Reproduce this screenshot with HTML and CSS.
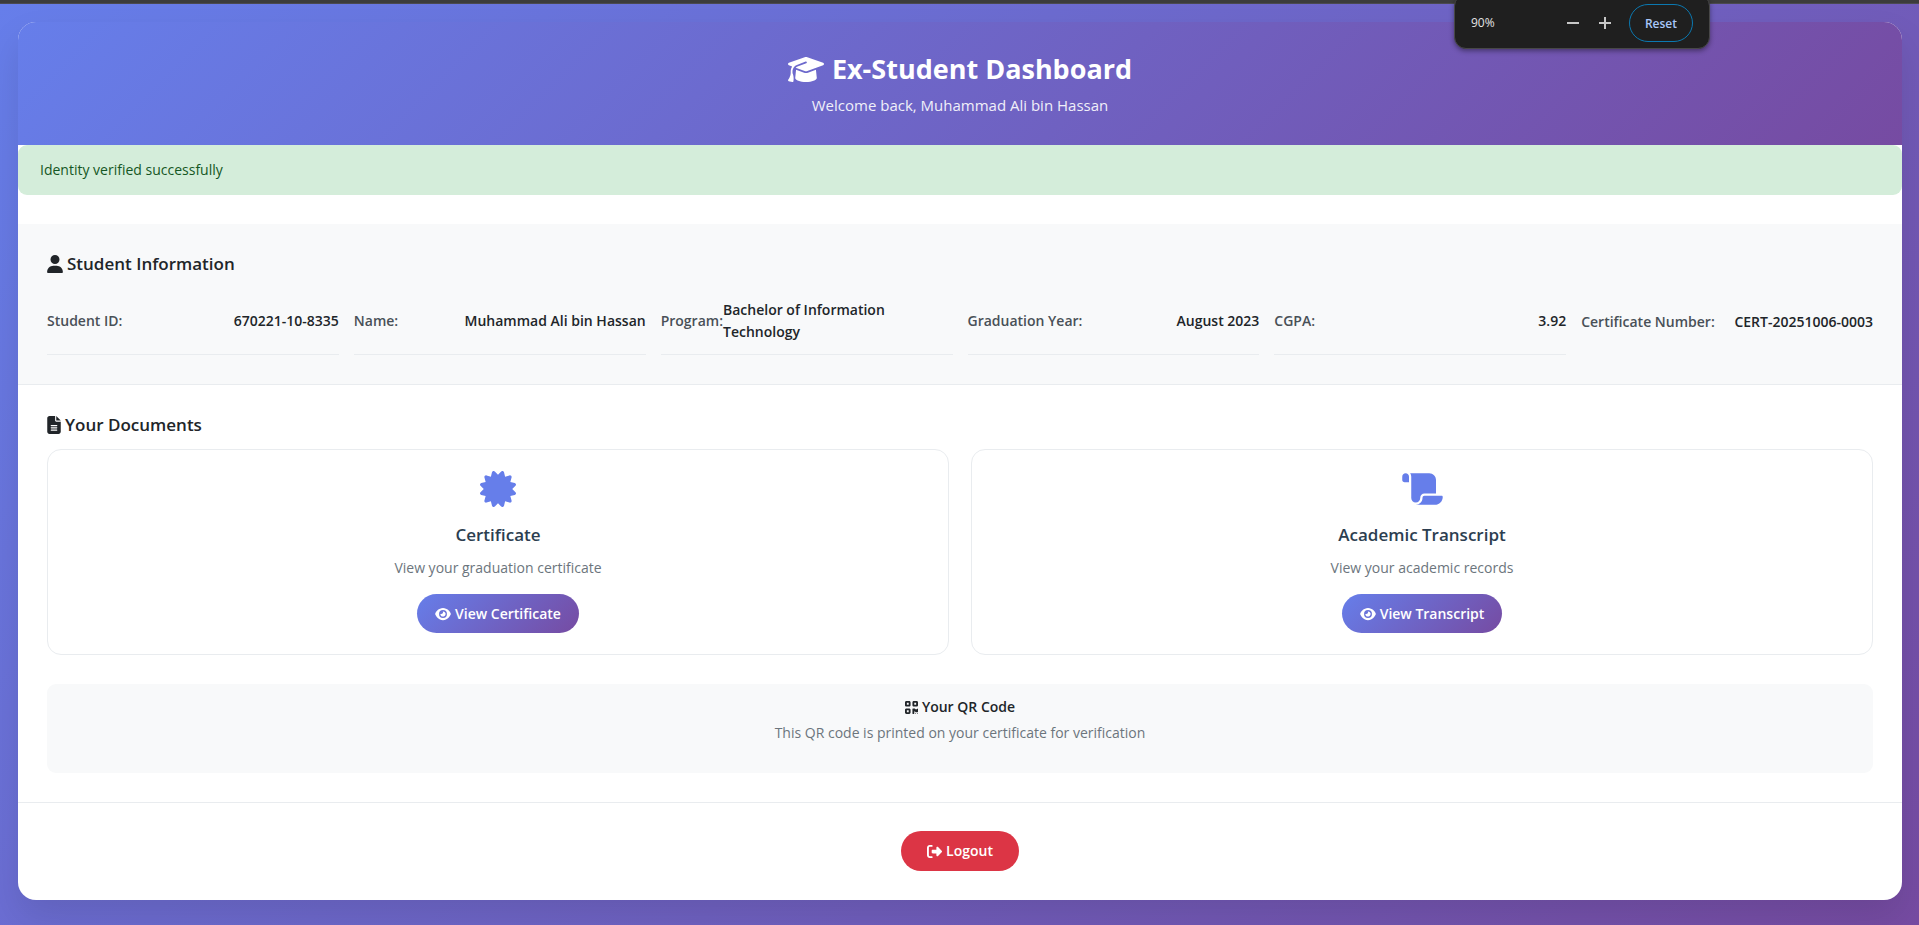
FILE: index.html
```html
<!DOCTYPE html>
<html lang="en">
<head>
<meta charset="utf-8">
<meta name="viewport" content="width=device-width, initial-scale=1">
<title>Ex-Student Dashboard</title>
<link rel="stylesheet" href="styles.css">
</head>
<body>
<svg class="sprite" aria-hidden="true">
  <symbol id="cap" viewBox="0 0 640 512"><path d="M320 32c-8.100 0-16.100 1.400-23.700 4.100L15.800 137.400C6.300 140.900 0 149.900 0 160s6.300 19.100 15.800 22.600l57.900 20.900C57.300 229.300 48 259.800 48 291.900v28.100c0 28.400-10.800 57.700-22.300 80.800c-6.500 13-13.900 25.800-22.500 37.600C0 442.700-.9 448.300 .9 453.400s6 8.900 11.200 10.200l64 16c4.200 1.100 8.700 .3 12.400-2s6.300-6.100 7.100-10.400c8.600-42.800 4.300-81.200-2.100-108.700C90.300 344.300 86 329.800 80 316.500V291.900c0-30.200 10.200-58.700 27.900-81.500c12.900-15.500 29.600-28 49.200-35.700l157-61.700c8.200-3.200 17.500 .8 20.700 9s-.8 17.500-9 20.700l-157 61.700c-12.400 4.900-23.300 12.400-32.200 21.600l159.600 57.600c7.600 2.700 15.600 4.100 23.700 4.100s16.100-1.400 23.700-4.100L624.200 182.600c9.500-3.400 15.800-12.500 15.800-22.600s-6.300-19.100-15.800-22.600L343.700 36.100C336.100 33.400 328.100 32 320 32zM128 408c0 35.300 86 72 192 72s192-36.700 192-72L496.700 262.600 354.500 314c-11.100 4-22.800 6-34.500 6s-23.500-2-34.500-6L143.300 262.600 128 408z"/></symbol>
  <symbol id="user" viewBox="0 0 448 512"><path d="M224 256A128 128 0 1 0 224 0a128 128 0 1 0 0 256zm-45.700 48C79.800 304 0 383.800 0 482.300C0 498.700 13.300 512 29.700 512H418.300c16.400 0 29.700-13.300 29.700-29.700C448 383.800 368.200 304 269.700 304H178.300z"/></symbol>
  <symbol id="file" viewBox="0 0 384 512"><path d="M64 0C28.700 0 0 28.700 0 64V448c0 35.300 28.700 64 64 64H320c35.300 0 64-28.700 64-64V160H256c-17.700 0-32-14.300-32-32V0H64zM256 0V128H384L256 0zM112 256H272c8.800 0 16 7.200 16 16s-7.200 16-16 16H112c-8.800 0-16-7.200-16-16s7.200-16 16-16zm0 64H272c8.800 0 16 7.200 16 16s-7.200 16-16 16H112c-8.800 0-16-7.200-16-16s7.200-16 16-16zm0 64H272c8.800 0 16 7.200 16 16s-7.200 16-16 16H112c-8.800 0-16-7.200-16-16s7.200-16 16-16z"/></symbol>
  <symbol id="certificate" viewBox="0 0 512 512"><path d="M211 7.300C205 1 196-1.400 187.600 .8s-14.900 8.900-17.100 17.300L154.700 80.600l-62-17.500c-8.400-2.400-17.400 0-23.500 6.100s-8.500 15.100-6.100 23.500l17.500 62L18.100 170.600c-8.400 2.100-15 8.700-17.300 17.100S1 205 7.300 211l46.200 45L7.300 301C1 307-1.400 316 .8 324.400s8.900 14.900 17.300 17.100l62.500 15.800-17.500 62c-2.400 8.400 0 17.400 6.100 23.500s15.100 8.500 23.500 6.100l62-17.500 15.800 62.500c2.100 8.400 8.700 15 17.100 17.300s17.300-.2 23.400-6.400l45-46.200 45 46.200c6.100 6.200 15 8.700 23.400 6.400s14.900-8.900 17.100-17.300l15.800-62.500 62 17.500c8.400 2.400 17.400 0 23.500-6.100s8.500-15.100 6.100-23.500l-17.500-62 62.500-15.800c8.400-2.100 15-8.700 17.300-17.100s-.2-17.400-6.400-23.400l-46.200-45 46.200-45c6.200-6.100 8.700-15 6.400-23.400s-8.900-14.900-17.300-17.100l-62.500-15.800 17.500-62c2.400-8.400 0-17.400-6.100-23.500s-15.100-8.500-23.500-6.100l-62 17.500L341.400 18.100c-2.100-8.400-8.700-15-17.100-17.300S307 1 301 7.300L256 53.500 211 7.300z"/></symbol>
  <symbol id="scroll" viewBox="0 0 576 512"><path d="M0 80v48c0 17.700 14.300 32 32 32H48 96V80c0-26.500-21.500-48-48-48S0 53.500 0 80zM112 32c10 13.400 16 30 16 48V384c0 35.300 28.700 64 64 64s64-28.700 64-64v-5.300c0-32.400 26.300-58.700 58.700-58.700H480V128c0-53-43-96-96-96H112zM464 480c61.900 0 112-50.100 112-112c0-8.800-7.200-16-16-16H314.700c-14.700 0-26.700 11.900-26.700 26.700V384c0 53-43 96-96 96H368h96z"/></symbol>
  <symbol id="eye" viewBox="0 0 576 512"><path d="M288 32c-80.800 0-145.500 36.800-192.600 80.600C48.600 156 17.300 208 2.500 243.700c-3.300 7.900-3.300 16.700 0 24.600C17.300 304 48.600 356 95.400 399.400C142.500 443.200 207.200 480 288 480s145.500-36.800 192.600-80.600c46.800-43.500 78.100-95.400 93-131.100c3.300-7.900 3.300-16.700 0-24.600c-14.900-35.700-46.200-87.700-93-131.100C433.500 68.800 368.800 32 288 32zM144 256a144 144 0 1 1 288 0 144 144 0 1 1 -288 0zm144-64c0 35.300-28.700 64-64 64c-7.100 0-13.900-1.200-20.300-3.300c-5.500-1.800-11.900 1.600-11.700 7.400c.3 6.900 1.300 13.800 3.200 20.700c13.700 51.200 66.400 81.600 117.600 67.900s81.600-66.400 67.900-117.600c-11.100-41.500-47.800-69.400-88.600-71.100c-5.800-.2-9.200 6.100-7.400 11.700c2.100 6.400 3.300 13.200 3.300 20.300z"/></symbol>
  <symbol id="qr" viewBox="0 0 448 512"><path d="M0 80C0 53.500 21.500 32 48 32h96c26.500 0 48 21.500 48 48v96c0 26.500-21.500 48-48 48H48c-26.500 0-48-21.500-48-48V80zM64 96v64h64V96H64zM0 336c0-26.500 21.500-48 48-48h96c26.500 0 48 21.500 48 48v96c0 26.500-21.500 48-48 48H48c-26.500 0-48-21.500-48-48V336zm64 16v64h64V352H64zM304 32h96c26.500 0 48 21.500 48 48v96c0 26.500-21.500 48-48 48H304c-26.500 0-48-21.500-48-48V80c0-26.500 21.500-48 48-48zm80 64H320v64h64V96zM256 304c0-8.800 7.200-16 16-16h64c8.800 0 16 7.200 16 16s7.200 16 16 16h32c8.800 0 16-7.200 16-16s7.200-16 16-16s16 7.200 16 16v96c0 8.800-7.200 16-16 16H368c-8.800 0-16-7.200-16-16s-7.200-16-16-16s-16 7.200-16 16v64c0 8.800-7.200 16-16 16H272c-8.800 0-16-7.200-16-16V304zM368 480a16 16 0 1 1 0-32 16 16 0 1 1 0 32zm64 0a16 16 0 1 1 0-32 16 16 0 1 1 0 32z" fill-rule="evenodd"/></symbol>
  <symbol id="logout" viewBox="0 0 512 512"><path d="M377.900 105.900L500.700 228.700c7.200 7.200 11.300 17.100 11.300 27.300s-4.100 20.100-11.300 27.300L377.900 406.100c-6.400 6.400-15 9.900-24 9.900c-18.700 0-33.900-15.200-33.900-33.900l0-62.100-128 0c-17.700 0-32-14.300-32-32l0-64c0-17.700 14.300-32 32-32l128 0 0-62.100c0-18.700 15.200-33.900 33.900-33.900c9 0 17.600 3.600 24 9.900zM160 96L96 96c-17.700 0-32 14.300-32 32l0 256c0 17.700 14.300 32 32 32l64 0c17.700 0 32 14.300 32 32s-14.300 32-32 32l-64 0c-53 0-96-43-96-96L0 128C0 75 43 32 96 32l64 0c17.700 0 32 14.300 32 32s-14.300 32-32 32z"/></symbol>
</svg>

<div class="window-edge"></div>

<div class="page">
  <main class="dashboard">
    <header class="hero">
      <h1 class="hero-title"><svg class="icon icon-cap"><use href="#cap"/></svg>Ex-Student Dashboard</h1>
      <p class="hero-text">Welcome back, Muhammad Ali bin Hassan</p>
    </header>

    <div class="alert" role="status">Identity verified successfully</div>

    <section class="info">
      <h2 class="section-title"><svg class="icon icon-user"><use href="#user"/></svg>Student Information</h2>
      <dl class="info-grid">
        <div class="info-item"><dt>Student ID:</dt><dd>670221-10-8335</dd></div>
        <div class="info-item"><dt>Name:</dt><dd>Muhammad Ali bin Hassan</dd></div>
        <div class="info-item"><dt>Program:</dt><dd>Bachelor of Information Technology</dd></div>
        <div class="info-item"><dt>Graduation Year:</dt><dd>August 2023</dd></div>
        <div class="info-item"><dt>CGPA:</dt><dd>3.92</dd></div>
        <div class="info-item"><dt>Certificate Number:</dt><dd>CERT-20251006-0003</dd></div>
      </dl>
    </section>

    <section class="documents">
      <h2 class="section-title"><svg class="icon icon-file"><use href="#file"/></svg>Your Documents</h2>
      <div class="cards">
        <article class="card">
          <svg class="icon icon-certificate"><use href="#certificate"/></svg>
          <h3 class="card-title">Certificate</h3>
          <p class="card-text">View your graduation certificate</p>
          <a class="btn btn-view" href="#certificate"><svg class="icon icon-eye"><use href="#eye"/></svg>View Certificate</a>
        </article>
        <article class="card">
          <svg class="icon icon-scroll"><use href="#scroll"/></svg>
          <h3 class="card-title">Academic Transcript</h3>
          <p class="card-text">View your academic records</p>
          <a class="btn btn-view" href="#transcript"><svg class="icon icon-eye"><use href="#eye"/></svg>View Transcript</a>
        </article>
      </div>
      <div class="qr-box">
        <h3 class="qr-title"><svg class="icon icon-qr"><use href="#qr"/></svg>Your QR Code</h3>
        <p class="card-text">This QR code is printed on your certificate for verification</p>
      </div>
    </section>

    <footer class="actions">
      <a class="btn btn-logout" href="#logout"><svg class="icon icon-logout"><use href="#logout"/></svg>Logout</a>
    </footer>
  </main>
</div>

<div class="zoom-bubble">
  <span class="zoom-level">90%</span>
  <button class="zoom-step" type="button" aria-label="Zoom out"><svg class="step-icon" viewBox="0 0 12 12"><path d="M0 5h12v2H0z"/></svg></button>
  <button class="zoom-step" type="button" aria-label="Zoom in"><svg class="step-icon" viewBox="0 0 12 12"><path d="M0 5h5V0h2v5h5v2H7v5H5V7H0z"/></svg></button>
  <button class="zoom-reset" type="button">Reset</button>
</div>
</body>
</html>
```
FILE: styles.css
```css
* {
  box-sizing: border-box;
}

html {
  min-height: 100%;
}

body {
  display: flex;
  flex-direction: column;
  min-height: 100vh;
  margin: 0;
  overflow-x: hidden;
  font-family: "Open Sans", "Noto Sans", sans-serif;
  font-size: 14px;
  line-height: 22px;
  color: #212529;
}

h1, h2, h3, p, dl, dd {
  margin: 0;
}

.sprite {
  display: none;
}

.icon {
  flex: none;
  fill: currentColor;
}

.window-edge {
  height: 4px;
  background: #3c3c3c;
  border-bottom: 1px solid #4b4a50;
}

.page {
  flex: 1;
  padding: 18px 17px 18px 18px;
  background: linear-gradient(135deg, #667eea 0%, #764ba2 100%);
}

.dashboard {
  overflow: hidden;
  background: #fff;
  border-radius: 18px;
  box-shadow: 0 18px 36px rgba(0, 0, 0, 0.1);
}

.hero {
  padding: 29px;
  text-align: center;
  color: #fff;
  background: linear-gradient(135deg, #667eea 0%, #764ba2 100%);
}

.hero-title {
  display: flex;
  align-items: center;
  justify-content: center;
  gap: 8px;
  margin-bottom: 7px;
  font-size: 27px;
  font-weight: 700;
  line-height: 36px;
}

.icon-cap {
  width: 36px;
  height: 29px;
}

.hero-text {
  font-size: 15px;
  opacity: 0.9;
}

.alert {
  padding: 14px 22px;
  margin-bottom: 29px;
  color: #155724;
  background: #d4edda;
  border-radius: 9px;
}

.info {
  padding: 29px;
  background: #f8f9fa;
  border-bottom: 1px solid #e9ecef;
}

.section-title {
  display: flex;
  align-items: center;
  gap: 4px;
  margin-bottom: 14px;
  font-size: 17px;
  font-weight: 600;
  line-height: 21px;
}

.icon-user {
  width: 16px;
  height: 18px;
}

.icon-file {
  width: 14px;
  height: 18px;
}

.info-grid {
  display: grid;
  grid-template-columns: repeat(6, minmax(0, 1fr));
  gap: 15px;
}

.info-item {
  display: flex;
  align-items: center;
  justify-content: space-between;
  padding: 11px 0;
  font-weight: 600;
  border-bottom: 1px solid #e9ecef;
}

.info-item:last-child {
  border-bottom: 0;
}

.info-item dt {
  color: #495057;
}

.documents {
  padding: 29px;
}

.cards {
  display: grid;
  grid-template-columns: repeat(2, 1fr);
  gap: 22px;
}

.card {
  display: flex;
  flex-direction: column;
  align-items: center;
  padding: 21px;
  text-align: center;
  border: 1px solid #e9ecef;
  border-radius: 14px;
}

.icon-certificate,
.icon-scroll {
  width: 36px;
  height: 36px;
  margin-bottom: 17px;
  color: #667eea;
}

.icon-scroll {
  width: 41px;
}

.card-title {
  margin-bottom: 11px;
  font-size: 17px;
  font-weight: 600;
  line-height: 22px;
  color: #2c3e50;
}

.card-text {
  margin-bottom: 15px;
  color: #6c757d;
}

.btn {
  display: inline-flex;
  align-items: center;
  gap: 4px;
  font-weight: 600;
  color: #fff;
  text-decoration: none;
  border-radius: 22px;
}

.btn-view {
  padding: 9px 18px;
  line-height: 21px;
  background: linear-gradient(135deg, #667eea 0%, #764ba2 100%);
}

.icon-eye {
  width: 16px;
  height: 14px;
}

.qr-box {
  padding: 14px;
  margin-top: 29px;
  text-align: center;
  background: #f8f9fa;
  border-radius: 9px;
}

.qr-title {
  display: flex;
  align-items: center;
  justify-content: center;
  gap: 4px;
  margin-bottom: 6px;
  font-size: 14px;
  font-weight: 600;
  line-height: 18px;
}

.icon-qr {
  width: 13px;
  height: 15px;
}

.actions {
  display: flex;
  justify-content: center;
  padding: 28px 29px 29px;
  border-top: 1px solid #e9ecef;
}

.btn-logout {
  padding: 9px 26px;
  background: #dc3545;
}

.icon-logout {
  width: 15px;
  height: 15px;
}

.zoom-bubble {
  position: absolute;
  top: -6px;
  right: 209px;
  display: flex;
  align-items: center;
  width: 256px;
  height: 55px;
  padding: 3px 16px 0;
  font-size: 12px;
  color: #e3e3e3;
  background: #1f1f1f;
  border: 1px solid #474747;
  border-radius: 12px;
  box-shadow: 0 2px 5px rgba(0, 0, 0, 0.4);
}

.zoom-level {
  flex: 1;
}

.zoom-step {
  display: flex;
  align-items: center;
  justify-content: center;
  width: 32px;
  height: 32px;
  padding: 0;
  background: none;
  border: 0;
}

.step-icon {
  width: 12px;
  height: 12px;
  fill: #c7c7c7;
}

.zoom-reset {
  width: 64px;
  height: 38px;
  padding: 0;
  margin-left: 8px;
  font-family: inherit;
  font-size: 12px;
  font-weight: 600;
  color: #a8c7fa;
  background: none;
  border: 1px solid #0b78b0;
  border-radius: 19px;
}
```
